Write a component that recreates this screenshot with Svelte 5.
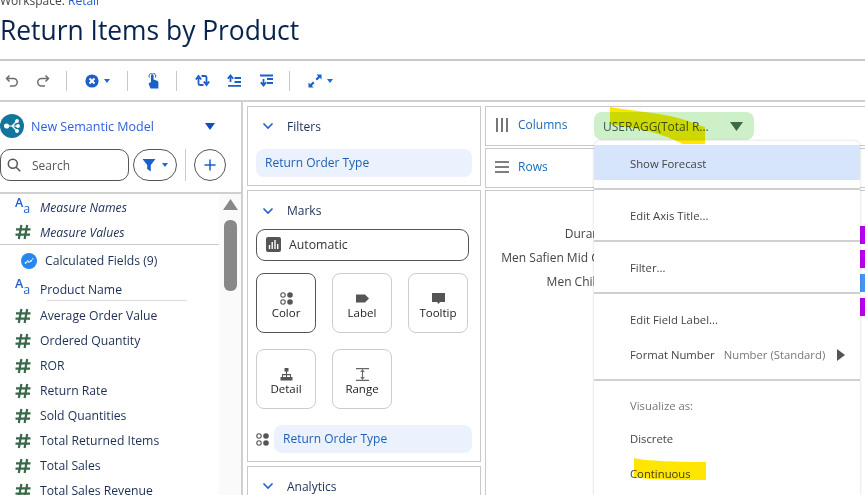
<script lang="ts">
  let fields = [
    "Average Order Value",
    "Ordered Quantity",
    "ROR",
    "Return Rate",
    "Sold Quantities",
    "Total Returned Items",
    "Total Sales",
    "Total Sales Revenue",
  ];
  let bars = [
    { label: "Durango Boot", color: "#b600f2" },
    { label: "Men Safien Mid GTX Boot", color: "#b600f2" },
    { label: "Men Chilkat 400 I", color: "#4b93f2" },
    { label: "", color: "#b600f2" },
  ];
</script>

{#snippet hash()}
  <svg class="fi" viewBox="0 0 16 16" width="16" height="16" fill="none" stroke="#39694a" stroke-width="2.2">
    <path d="M6.400 1 3.800 15M12.200 1 9.600 15M1 5.300h14.500M.5 10.700h14.500" />
  </svg>
{/snippet}

{#snippet aa()}
  <span class="aa"><b>A</b><i>a</i></span>
{/snippet}

{#snippet chev()}
  <svg class="chev" viewBox="0 0 12 8" width="12" height="8" fill="none" stroke="#1f5fd0" stroke-width="1.6">
    <path d="M1.500 1.500 6 6l4.500-4.500" />
  </svg>
{/snippet}

{#snippet caret()}
  <svg viewBox="0 0 6 4" width="6" height="4" fill="#1f66d8"><path d="M0 0h6L3 4z" /></svg>
{/snippet}

{#snippet dots()}
  <svg viewBox="0 0 13 13" width="13" height="13"><circle cx="3" cy="3" r="2.200" fill="none" stroke="#555" stroke-width="1.100" /><circle cx="10" cy="3" r="2.800" fill="#555" /><circle cx="3" cy="10" r="2.200" fill="none" stroke="#555" stroke-width="1.100" /><circle cx="10" cy="10" r="2.800" fill="#555" /></svg>
{/snippet}

<div class="page">
  <header>
    <div class="ws">Workspace: <a href="#r">Retail</a></div>
    <h1>Return Items by Product</h1>
  </header>

  <div class="toolbar">
    <div class="tgroup undo">
      <svg viewBox="0 0 14 14" width="14" height="14" fill="none" stroke="#6e6e6e" stroke-width="1.5"><path d="M4.500 1.500 1.500 4.500l3 3M1.500 4.500h7a3.600 3.600 0 0 1 0 7.500H5" /></svg>
      <svg viewBox="0 0 14 14" width="14" height="14" fill="none" stroke="#6e6e6e" stroke-width="1.5"><path d="M9.500 1.500l3 3-3 3M12.500 4.500h-7a3.600 3.600 0 0 0 0 7.500H9" /></svg>
    </div>
    <div class="tgroup clear">
      <svg viewBox="0 0 14 14" width="14" height="14"><circle cx="7" cy="7" r="6.600" fill="#1c5fc8" /><path d="M4.500 4.500l5 5M9.500 4.500l-5 5" stroke="#fff" stroke-width="2" /></svg>
      {@render caret()}
    </div>
    <div class="tgroup touch">
      <svg viewBox="0 0 12 16" width="12" height="16" fill="#1c5fc8"><path d="M1.500 10.500 4 9V2.600a1.300 1.300 0 0 1 2.600 0v4l3.600 1.200c.8.3 1.200.9 1.200 1.700V15.500H3.500z" /><path d="M2.200 4.500a3.400 3.400 0 1 1 6.400 0" fill="none" stroke="#1c5fc8" stroke-width="1" /></svg>
    </div>
    <div class="tgroup sorts">
      <svg viewBox="0 0 15 13" width="15" height="13" fill="none" stroke="#1c5fc8" stroke-width="1.8"><path d="M3.500 4V9.500q0 1.500 1.500 1.500h3.500M.8 5.500l2.700-3.500 2.700 3.500M11.500 9V3.500q0-1.500-1.500-1.500H6.500M8.800 7.500l2.700 3.500 2.700-3.500" /></svg>
      <svg viewBox="0 0 15 13" width="15" height="13" fill="none" stroke="#1c5fc8" stroke-width="1.8"><path d="M3.500 8V2M.8 4.800l2.700-3.300 2.700 3.300M7.500 4h6.500M7.500 8h6.500M1 11.800h13" /></svg>
      <svg viewBox="0 0 15 13" width="15" height="13" fill="none" stroke="#1c5fc8" stroke-width="1.8"><path d="M4.500 5v6M1.800 8.200l2.700 3.300 2.700-3.300M1 1.500h13M8 5h6M8 9h6" /></svg>
    </div>
    <div class="tgroup fit">
      <svg viewBox="0 0 14 14" width="14" height="14" fill="#1c5fc8"><path d="M8.500.5h5v5L11.800 3.800 9 6.600 7.500 5.100l2.700-2.900zM5.500 13.500h-5v-5l1.700 1.700L5 7.400l1.500 1.500-2.700 2.900z" /></svg>
      {@render caret()}
    </div>
  </div>

  <div class="work">
    <aside class="data">
      <div class="model">
        <svg viewBox="0 0 24 24" width="24" height="24">
          <circle cx="12" cy="12" r="12" fill="#12759e" />
          <g fill="#fff" stroke="#fff" stroke-width="1.2">
            <circle cx="6.500" cy="12" r="2" />
            <circle cx="17" cy="7" r="1.300" />
            <circle cx="18" cy="12" r="1.300" />
            <circle cx="17" cy="17" r="1.300" />
            <path d="M6.500 12H18M12 12l5-5M12 12l5 5" fill="none" />
          </g>
        </svg>
        <span class="mname">New Semantic Model</span>
        <svg class="mcaret" viewBox="0 0 10 7" width="10" height="7" fill="#0f4fc0"><path d="M0 0h10L5 7z" /></svg>
      </div>
      <div class="searchrow">
        <div class="search">
          <svg viewBox="0 0 14 14" width="14" height="14" fill="none" stroke="#555" stroke-width="1.5"><circle cx="5.800" cy="5.800" r="4.500" /><path d="m9.200 9.200 4 4" /></svg>
          <span>Search</span>
        </div>
        <div class="fpill">
          <svg viewBox="0 0 14 14" width="14" height="14" fill="#1c5fc8"><path d="M.5 1h13L8.800 7v6.500L5.200 11V7z" /></svg>
          {@render caret()}
        </div>
        <div class="vsep"></div>
        <div class="plus">
          <svg viewBox="0 0 14 14" width="14" height="14" stroke="#1c5fc8" stroke-width="1.5"><path d="M7 1.500v11M1.500 7h11" /></svg>
        </div>
      </div>

      <div class="listwrap">
        <div class="list">
          <div class="row it">{@render aa()}<span>Measure Names</span></div>
          <div class="row it last">{@render hash()}<span>Measure Values</span></div>
          <div class="calc">
            <svg viewBox="0 0 16 16" width="16" height="16"><circle cx="8" cy="8" r="8" fill="#2488f0" /><path d="M4 10.500 6.500 8l2 1.500L12 5.500" fill="none" stroke="#fff" stroke-width="1.5" stroke-dasharray="2.500 1" /></svg>
            <span>Calculated Fields (9)</span>
          </div>
          <div class="row pname">{@render aa()}<span>Product Name</span></div>
          <div class="thin"></div>
          {#each fields as f}
            <div class="row">{@render hash()}<span>{f}</span></div>
          {/each}
        </div>
        <div class="scroll">
          <svg viewBox="0 0 15 11" width="15" height="11" fill="#888"><path d="M7.500 0 15 11H0z" /></svg>
          <div class="thumb"></div>
        </div>
      </div>
    </aside>

    <section class="shelves">
      <div class="card filters">
        <div class="chead">{@render chev()}<span>Filters</span></div>
        <div class="pill">Return Order Type</div>
      </div>
      <div class="card marks">
        <div class="chead">{@render chev()}<span>Marks</span></div>
        <div class="auto">
          <svg viewBox="0 0 15 15" width="15" height="15"><rect width="15" height="15" rx="2" fill="#555" /><path d="M3.500 12V8M6.200 12V5M9 12V3M11.700 12V7" stroke="#fff" stroke-width="1.4" /></svg>
          <span>Automatic</span>
        </div>
        <div class="mbtns">
          <div class="mbtn on">
            {@render dots()}
            <span>Color</span>
          </div>
          <div class="mbtn">
            <svg viewBox="0 0 13 13" width="13" height="13" fill="#555"><path d="M0 2.500h9l4 4-4 4H0z" /></svg>
            <span>Label</span>
          </div>
          <div class="mbtn">
            <svg viewBox="0 0 13 13" width="13" height="13" fill="#555"><path d="M0 1h13v9H8l-1.500 2L5 10H0z" /></svg>
            <span>Tooltip</span>
          </div>
          <div class="mbtn">
            <svg viewBox="0 0 13 13" width="13" height="13" fill="#555"><path d="M4.500 0h4v3.500H7V6h4v3h1.500v3.500h-4V9H10V7.200H7V9h1.500v3.500h-4V9H6V7.200H3V9h1.500v3.500H.5V9H2V6h4V3.500H4.500z" /></svg>
            <span>Detail</span>
          </div>
          <div class="mbtn">
            <svg viewBox="0 0 13 13" width="13" height="13" fill="none" stroke="#666" stroke-width="1.1"><path d="M0 .6h13M0 12.400h13M6.500 2v9M4.700 4l1.800-2 1.800 2M4.700 9l1.800 2 1.800-2" /></svg>
            <span>Range</span>
          </div>
        </div>
        <div class="encoded">
          {@render dots()}
          <div class="pill">Return Order Type</div>
        </div>
      </div>
      <div class="card analytics">
        <div class="chead">{@render chev()}<span>Analytics</span></div>
      </div>
    </section>

    <section class="canvas">
      <div class="shelf">
        <svg viewBox="0 0 14 14" width="14" height="14" stroke="#555" stroke-width="1.6"><path d="M2 0v14M7 0v14M12 0v14" /></svg>
        <span class="slabel">Columns</span>
        <div class="gpill">
          <span>USERAGG(Total R...</span>
          <svg viewBox="0 0 13 9" width="13" height="9" fill="#3c6b4a"><path d="M0 0h13L6.500 9z" /></svg>
        </div>
      </div>
      <div class="shelf">
        <svg viewBox="0 0 14 14" width="14" height="14" stroke="#555" stroke-width="1.6"><path d="M0 2h14M0 7h14M0 12h14" /></svg>
        <span class="slabel">Rows</span>
      </div>
      <div class="viz">
        {#each bars as b}
          <div class="bar">
            <span class="blabel">{b.label}</span>
            <span class="bfill" style="background:{b.color}"></span>
          </div>
        {/each}
      </div>
    </section>
  </div>

  <div class="menu">
    <div class="mi hot">Show Forecast</div>
    <div class="msep"></div>
    <div class="mi">Edit Axis Title...</div>
    <div class="msep"></div>
    <div class="mi">Filter...</div>
    <div class="msep"></div>
    <div class="mi">Edit Field Label...</div>
    <div class="mi fmt">
      <span>Format Number</span>
      <span class="sub">Number (Standard)</span>
      <svg viewBox="0 0 8 12" width="8" height="12" fill="#555"><path d="M0 0l8 6-8 6z" /></svg>
    </div>
    <div class="msep"></div>
    <div class="mi head">Visualize as:</div>
    <div class="mi">Discrete</div>
    <div class="mi">Continuous</div>
  </div>

  <svg class="marker" viewBox="0 0 865 495" width="865" height="495" fill="#ffe600">
    <path d="M610 107c25 4 50 6 68 11 12 3 20 7 27 9v17h-22c-12-6-30-13-50-16-8-1-16-3-23-4z" />
    <path d="M634 458c10 3 45 4 72 4v18c-25 0-50 0-66-2l-6-1z" />
  </svg>
</div>

<style>
  :global(body) {
    margin: 0;
    background: #fff;
    font-family: "Open Sans", "Noto Sans", sans-serif;
    color: #1c2f55;
  }

  .page {
    position: relative;
    width: 865px;
    height: 495px;
    overflow: hidden;
  }

  header {
    height: 59px;
    border-bottom: 2px solid #c9c9c9;
    overflow: hidden;
  }

  .ws {
    margin-top: -8px;
    height: 16px;
    font-size: 12px;
    line-height: 17px;
    color: #444;
  }
  .ws a {
    color: #1f5fd0;
    text-decoration: none;
  }

  h1 {
    margin: 0;
    font-size: 26.4px;
    font-weight: 400;
    line-height: 44px;
    color: #07234f;
  }

  .toolbar {
    height: 39px;
    display: flex;
    align-items: center;
    border-bottom: 2px solid #d0d0d0;
  }

  .tgroup {
    height: 20px;
    display: flex;
    align-items: center;
    box-sizing: border-box;
    border-right: 1.5px solid #c9c9c9;
  }
  .undo { padding-left: 5px; width: 67px; gap: 17px; }
  .clear { width: 61px; padding-left: 18px; gap: 5px; }
  .touch { width: 49px; padding-left: 19px; }
  .sorts { width: 113px; padding-left: 18px; gap: 17px; }
  .fit { border: 0; padding-left: 18px; gap: 5px; }

  .work {
    display: flex;
    height: 394px;
  }

  .data {
    width: 241px;
    flex: none;
    border-right: 2px solid #d0d0d0;
    overflow: hidden;
  }

  .model {
    display: flex;
    align-items: center;
    height: 24px;
    margin-top: 12px;
  }
  .mname {
    margin-left: 7px;
    font-size: 12.5px;
    color: #2f5fd8;
  }
  .mcaret { margin-left: 51px; }

  .searchrow {
    display: flex;
    align-items: center;
    margin-top: 11px;
    height: 32px;
  }
  .search {
    width: 129px;
    height: 32px;
    box-sizing: border-box;
    border: 1px solid #555;
    border-radius: 10px;
    display: flex;
    align-items: center;
    padding-left: 6px;
    gap: 11px;
    font-size: 12px;
    color: #555;
  }
  .fpill {
    margin-left: 4px;
    width: 44px;
    height: 32px;
    box-sizing: border-box;
    border: 1px solid #555;
    border-radius: 16px;
    display: flex;
    align-items: center;
    justify-content: center;
    gap: 6px;
  }
  .vsep {
    width: 1px;
    height: 32px;
    background: #ccc;
    margin: 0 8px;
  }
  .plus {
    width: 32px;
    height: 32px;
    box-sizing: border-box;
    border: 1px solid #555;
    border-radius: 50%;
    display: flex;
    align-items: center;
    justify-content: center;
  }

  .listwrap {
    margin-top: 11px;
    border-top: 2px solid #d0d0d0;
    display: flex;
    height: 310px;
  }

  .list {
    width: 219px;
    flex: none;
    padding-top: 1px;
  }

  .row {
    height: 25px;
    display: flex;
    align-items: center;
    font-size: 12.2px;
    padding-left: 15px;
    gap: 9px;
    white-space: nowrap;
  }
  .row.it { font-style: italic; }
  .row.last {
    border-bottom: 1px solid #c9c9c9;
    height: 24px;
  }

  .fi { flex: none; }

  .aa {
    width: 16px;
    height: 16px;
    display: inline-flex;
    color: #1f5fd0;
    font-style: normal;
    line-height: 1;
    flex: none;
  }
  .aa b {
    font-size: 12.5px;
    font-weight: 600;
    transform: translateY(-3px);
  }
  .aa i {
    font-size: 12.5px;
    font-style: normal;
    transform: translateY(3px);
  }

  .calc {
    height: 31px;
    display: flex;
    align-items: center;
    font-size: 12.2px;
    padding-left: 21px;
    gap: 8px;
  }

  .pname {
    height: 24px;
    margin-top: 1px;
  }

  .thin {
    height: 1px;
    width: 140px;
    margin: -1px 0 2px 47px;
    background: #ddd;
  }

  .scroll {
    flex: 1;
    background: #fafafa;
    display: flex;
    flex-direction: column;
    align-items: center;
    padding-top: 5px;
  }
  .thumb {
    margin-top: 10px;
    width: 13px;
    height: 71px;
    border-radius: 6px;
    background: #888;
  }

  .shelves {
    width: 234px;
    flex: none;
    margin-left: 4px;
    padding-top: 4px;
    display: flex;
    flex-direction: column;
    gap: 4px;
  }

  .card {
    border: 1px solid #c9c9c9;
    box-sizing: border-box;
    padding: 0 8px;
  }
  .filters { height: 80px; flex: none; }
  .marks { height: 272px; flex: none; }
  .analytics { flex: 1; }

  .chead {
    height: 42px;
    box-sizing: border-box;
    padding: 0 0 4px 6px;
    display: flex;
    align-items: center;
    font-size: 12px;
    gap: 13px;
  }
  .marks .chead {
    height: 38px;
    padding: 1px 0 0 6px;
  }

  .pill {
    height: 28px;
    line-height: 27px;
    border-radius: 8px;
    background: #ebf2fe;
    color: #1f5fb0;
    font-size: 12px;
    padding-left: 9px;
    flex: 1;
  }

  .auto {
    width: 213px;
    height: 32px;
    box-sizing: border-box;
    border: 1px solid #555;
    border-radius: 9px;
    display: flex;
    align-items: center;
    padding: 0 0 2px 9px;
    gap: 8px;
    font-size: 12.3px;
    color: #333;
  }

  .mbtns {
    margin-top: 12px;
    display: grid;
    grid-template-columns: repeat(3, 60px);
    grid-auto-rows: 60px;
    gap: 16px;
  }
  .mbtn {
    border: 1px solid #ccc;
    border-radius: 8px;
    box-sizing: border-box;
    display: flex;
    flex-direction: column;
    align-items: center;
    padding-top: 18px;
    font-size: 11.5px;
    line-height: 15px;
    color: #222;
  }
  .mbtn.on { border-color: #555; }

  .encoded {
    margin-top: 16px;
    display: flex;
    align-items: center;
    gap: 5px;
  }

  .canvas {
    flex: 1;
    margin-left: 4px;
    padding-top: 4px;
    display: flex;
    flex-direction: column;
    gap: 2px;
  }

  .shelf {
    height: 40px;
    box-sizing: border-box;
    border: 1px solid #c9c9c9;
    border-right: 0;
    display: flex;
    align-items: center;
    padding: 0 0 3px 9px;
    gap: 9px;
  }
  .slabel {
    font-size: 12px;
    color: #1c6bb8;
    width: 67px;
  }
  .gpill {
    width: 160px;
    height: 28px;
    margin-top: 3px;
    background: #cdf0c8;
    border-radius: 8px;
    display: flex;
    align-items: center;
    justify-content: space-between;
    box-sizing: border-box;
    padding: 0 11px 0 9px;
    font-size: 12px;
    color: #3c5a50;
  }

  .viz {
    flex: 1;
    border: 1px solid #c9c9c9;
    border-right: 0;
    border-bottom: 0;
    padding-top: 35px;
    display: flex;
    flex-direction: column;
    gap: 6px;
  }
  .bar {
    height: 18px;
    display: flex;
    align-items: center;
  }
  .blabel {
    width: 157px;
    margin-top: -4px;
    text-align: right;
    font-size: 12px;
    color: #444;
    white-space: nowrap;
  }
  .bfill {
    margin-left: auto;
    width: 5px;
    height: 18px;
  }

  .menu {
    position: absolute;
    left: 594px;
    top: 141px;
    width: 266px;
    height: 360px;
    box-sizing: border-box;
    padding-top: 4px;
    background: #fff;
    border-radius: 6px;
    box-shadow: 0 0 3px rgba(0, 0, 0, 0.18);
    font-size: 11.3px;
    color: #444;
  }
  .mi {
    height: 35px;
    display: flex;
    align-items: center;
    padding: 2px 0 0 36px;
    box-sizing: border-box;
    white-space: nowrap;
  }
  .mi.hot { background: #d6e5fb; }
  .msep {
    height: 2px;
    background: #d0d0d0;
    margin: 7px 0;
  }
  .mi + .msep { margin-top: 8px; }
  .fmt { gap: 9px; }
  .sub { color: #777; }
  .fmt svg { margin-left: 3px; }
  .head { color: #777; height: 32px; }

  .marker {
    position: absolute;
    left: 0;
    top: 0;
    mix-blend-mode: multiply;
    pointer-events: none;
  }
</style>
